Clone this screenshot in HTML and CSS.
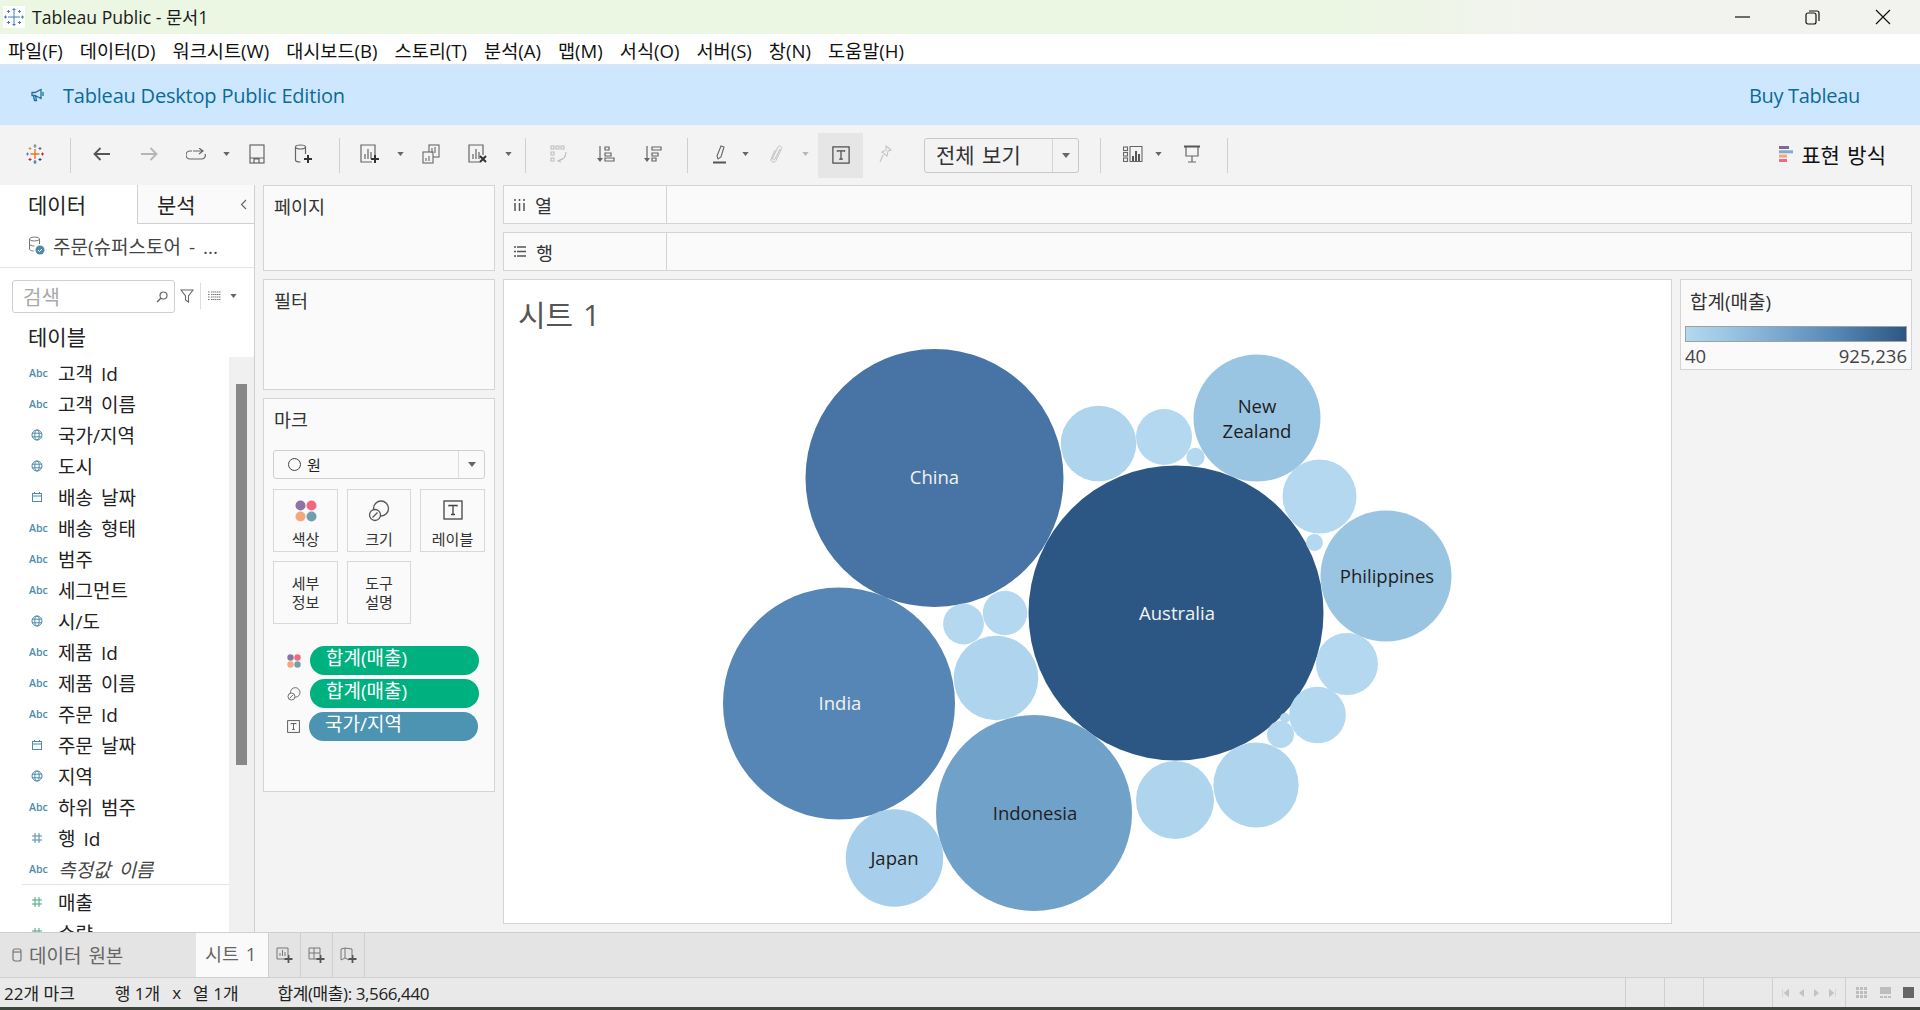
FILE: index.html
```html
<!DOCTYPE html>
<html lang="ko">
  <head>
    <meta charset="UTF-8" />
    <title>Tableau Public - 문서1</title>
    <link rel="stylesheet" href="styles.css">
  </head>
  <body>
    <svg class="defs" width="0" height="0">
      <symbol id="i-globe" viewBox="0 0 12 12"><g fill="none" stroke="#4d8bab" stroke-width="1"><circle cx="6" cy="6" r="5"/><ellipse cx="6" cy="6" rx="2.2" ry="5"/><path d="M1 4.2h10M1 7.8h10"/></g></symbol>
      <symbol id="i-cal" viewBox="0 0 12 12"><g fill="none" stroke="#4d8bab" stroke-width="1"><rect x="1.5" y="2.5" width="9" height="8"/><path d="M1.5 5h9M3.5 1v2M8.5 1v2"/></g></symbol>
      <symbol id="i-hash" viewBox="0 0 12 12"><path d="M4 1v10M8 1v10M1 4h10M1 8h10" fill="none" stroke="currentColor"/></symbol>
      <symbol id="i-dots" viewBox="0 0 22 22"><circle cx="5.5" cy="5.5" r="5" fill="#8b76a3"/><circle cx="16.5" cy="5.5" r="5" fill="#f4687f"/><circle cx="5.5" cy="16.5" r="5" fill="#f4a77a"/><circle cx="16.5" cy="16.5" r="5" fill="#6f9fb0"/></symbol>
      <symbol id="i-size" viewBox="0 0 22 22"><g fill="none" stroke="#555" stroke-width="1.3"><circle cx="13" cy="8.5" r="7.5"/><circle cx="7" cy="15" r="5.5" fill="#fafafa"/><path d="M4.5 17.5l5-5"/></g></symbol>
      <symbol id="i-text" viewBox="0 0 20 20"><g fill="none" stroke="#444" stroke-width="1.3"><rect x="1" y="1" width="18" height="18"/><path d="M6 6.5v-1h8v1M10 5.5v9M8 14.5h4"/></g></symbol>
      <symbol id="i-caret" viewBox="0 0 8 5"><path d="M0 0h8L4 5z" fill="#666"/></symbol>
      <symbol id="i-caret-off" viewBox="0 0 8 5"><path d="M0 0h8L4 5z" fill="#b8b8b8"/></symbol>
    </svg>

    <div class="titlebar">
      <svg class="app-icon" width="22" height="22" viewBox="0 0 22 22">
        <rect width="22" height="22" fill="#fff"/>
        <path d="M11 5v12M5 11h12M11 2v3M9.500 3.500h3M11 17v3M9.500 18.500h3M2.500 9.500v3M1 11h3M19.500 9.500v3M18 11h3M5.500 4v3M4 5.500h3M16.500 4v3M15 5.500h3M5.500 15v3M4 16.500h3M16.500 15v3M15 16.500h3" stroke="#3f7fb5" fill="none"/>
      </svg>
      <span class="app-title">Tableau Public - 문서1</span>
      <div class="win-ctrls">
        <svg width="16" height="16" viewBox="0 0 16 16"><path d="M0 8h15" stroke="#111" stroke-width="1.2"/></svg>
        <svg width="16" height="16" viewBox="0 0 16 16"><g fill="none" stroke="#111" stroke-width="1.2"><rect x="1" y="4" width="10" height="11" rx="2"/><path d="M4 2h8a2 2 0 0 1 2 2v8"/></g></svg>
        <svg width="16" height="16" viewBox="0 0 16 16"><path d="M1 1l14 14M15 1L1 15" stroke="#111" stroke-width="1.2"/></svg>
      </div>
    </div>

    <div class="menubar">
      <span>파일(F)</span><span>데이터(D)</span><span>워크시트(W)</span><span>대시보드(B)</span><span>스토리(T)</span><span>분석(A)</span><span>맵(M)</span><span>서식(O)</span><span>서버(S)</span><span>창(N)</span><span>도움말(H)</span>
    </div>

    <div class="banner">
      <svg width="13" height="14" viewBox="0 0 13 14"><path d="M1 4.500h3l6-3v9l-6-3H1zM2.500 8l1 4.500h2L4.500 8M12 4v4" fill="none" stroke="#1f6f9f" stroke-width="1.300"/></svg>
      <span class="banner-title">Tableau Desktop Public Edition</span>
      <span class="banner-buy">Buy Tableau</span>
    </div>

    <div class="toolbar">
      <div class="tb-logo">
        <svg width="18" height="20" viewBox="0 0 18 20">
          <path d="M9 5v10M4.500 10h9" stroke="#e8762b" stroke-width="1.4" fill="none"/>
          <path d="M9 0v4M7.500 2h3" stroke="#5b879b" fill="none"/>
          <path d="M9 16v4M7.500 18h3" stroke="#3f5f86" fill="none"/>
          <path d="M1.500 8.500v3M0 10h3" stroke="#59879b" fill="none"/>
          <path d="M16.500 8.500v3M15 10h3" stroke="#c72035" fill="none"/>
          <path d="M4 3v3M2.500 4.500h3" stroke="#eb912b" fill="none"/>
          <path d="M14 3v3M12.500 4.500h3" stroke="#5b6591" fill="none"/>
          <path d="M4 14v3M2.500 15.500h3" stroke="#c72035" fill="none"/>
          <path d="M14 14v3M12.500 15.500h3" stroke="#1f457e" fill="none"/>
        </svg>
      </div>
      <div class="tb-sep"></div>
      <div class="tb-group g1">
        <div class="tb"><svg width="18" height="14" viewBox="0 0 18 14"><path d="M17 7H2M7.500 1L1.500 7l6 6" fill="none" stroke="#555" stroke-width="1.8"/></svg></div>
        <div class="tb"><svg width="18" height="14" viewBox="0 0 18 14"><path d="M1 7h15M10.500 1l6 6-6 6" fill="none" stroke="#b5b5b5" stroke-width="1.8"/></svg></div>
        <div class="tb"><svg width="20" height="12" viewBox="0 0 20 12"><path d="M6 3H4a3.500 3.500 0 0 0 0 8h12a3.500 3.500 0 0 0 3-5M7 3h9M13 0l4 3-4 3" fill="none" stroke="#666" stroke-width="1.2"/></svg></div>
        <div class="tb-caret"><svg width="7" height="4"><use href="#i-caret"/></svg></div>
        <div class="tb"><svg width="16" height="20" viewBox="0 0 16 20"><g fill="none" stroke="#666" stroke-width="1.2"><rect x="1" y="1" width="14" height="18"/><path d="M1 14h14M5 19v-4h5v4"/></g></svg></div>
        <div class="tb"><svg width="20" height="20" viewBox="0 0 20 20"><g fill="none" stroke="#666" stroke-width="1.2"><ellipse cx="6.500" cy="3" rx="5" ry="2"/><path d="M1.500 3v13c0 1 1.500 2 5 2M11.500 3v7"/></g><path d="M14 11v8M10 15h8" stroke="#333" stroke-width="2"/></svg></div>
      </div>
      <div class="tb-sep"></div>
      <div class="tb-group g2">
        <div class="tb"><svg width="20" height="20" viewBox="0 0 20 20"><g fill="none" stroke="#666" stroke-width="1.2"><path d="M12 18H1V1h14v10"/><path d="M5 15V10M8 15V5M11 15V8"/></g><path d="M15 11v8M11 15h8" stroke="#333" stroke-width="2"/></svg></div>
        <div class="tb-caret"><svg width="7" height="4"><use href="#i-caret"/></svg></div>
        <div class="tb"><svg width="18" height="20" viewBox="0 0 18 20"><g fill="none" stroke="#666" stroke-width="1.100"><rect x="7" y="1" width="10" height="12"/><rect x="1" y="8" width="10" height="11" fill="#f3f3f3"/><path d="M4 17v-3M7 17v-5M10 9V4M13 9V3"/></g></svg></div>
        <div class="tb"><svg width="20" height="20" viewBox="0 0 20 20"><g fill="none" stroke="#666" stroke-width="1.2"><path d="M12 18H1V1h14v10"/><path d="M5 15V10M8 15V5M11 15V8"/></g><path d="M12 12l6 6M18 12l-6 6" stroke="#333" stroke-width="2"/></svg></div>
        <div class="tb-caret"><svg width="7" height="4"><use href="#i-caret"/></svg></div>
      </div>
      <div class="tb-sep"></div>
      <div class="tb-group g3">
        <div class="tb"><svg width="18" height="18" viewBox="0 0 18 18"><g fill="none" stroke="#bdbdbd" stroke-width="1.100"><path d="M1 1h3v3H1zM6 1h3v3H6zM11 1h3v3h-3zM1 7h3v3H1zM1 13h3v3H1z"/><path d="M16 7c0 5-3 8-8 9M14 13l-6 3 3 1"/></g></svg></div>
        <div class="tb"><svg width="18" height="18" viewBox="0 0 18 18"><g fill="none" stroke="#666" stroke-width="1.2"><path d="M3 1v14"/><path d="M8 2h4v3H8zM8 8h6v3H8zM8 13h9v3H8z"/></g><path d="M0 13h6l-3 4z" fill="#666"/></svg></div>
        <div class="tb"><svg width="18" height="18" viewBox="0 0 18 18"><g fill="none" stroke="#666" stroke-width="1.2"><path d="M3 1v14"/><path d="M8 2h9v3H8zM8 8h6v3H8zM8 13h4v3H8z"/></g><path d="M0 13h6l-3 4z" fill="#666"/></svg></div>
      </div>
      <div class="tb-sep"></div>
      <div class="tb-group g4">
        <div class="tb-s"><svg width="14" height="20" viewBox="0 0 14 20"><path d="M4 12L8 2l3 1-3 10-3 2z" fill="none" stroke="#666" stroke-width="1.100"/><path d="M0 18.500h13" stroke="#555" stroke-width="2"/></svg></div>
        <div class="tb-caret"><svg width="7" height="4"><use href="#i-caret"/></svg></div>
        <div class="tb-s tb-gap-l"><svg width="14" height="20" viewBox="0 0 14 20"><path d="M10 5l-5 10c-.8 1.500-3 .7-2.300-1L8 3c1-2 4.500-.8 3.500 1.500L6 16.500c-1.500 3-6 1.500-4.800-1.500L5 6" fill="none" stroke="#c0c0c0" stroke-width="1"/></svg></div>
        <div class="tb-caret tb-gap-s"><svg width="7" height="4"><use href="#i-caret-off"/></svg></div>
        <div class="tb-on"><svg width="18" height="18"><use href="#i-text"/></svg></div>
        <div class="tb-pin"><svg width="14" height="18" viewBox="0 0 14 18"><path d="M8 1l5 4-3 1-1 5-5-4 4-2zM5 10l-3 7" fill="none" stroke="#c4c4c4" stroke-width="1.100"/></svg></div>
        <div class="fit-select"><span class="fit-label">전체 보기</span><span class="fit-arrow"><svg width="8" height="5"><use href="#i-caret"/></svg></span></div>
      </div>
      <div class="tb-sep tb-sep-fit"></div>
      <div class="tb-group g5">
        <div class="tb-s"><svg width="20" height="16" viewBox="0 0 20 16"><g fill="none" stroke="#666" stroke-width="1.100"><rect x="0.500" y="1" width="4" height="3.500"/><rect x="0.500" y="6.500" width="4" height="3.500"/><rect x="0.500" y="12" width="4" height="3.500"/><path d="M7 .5h12v15H7z"/></g><path d="M10 15V10M13 15V5M16 15V8" stroke="#555" stroke-width="2"/></svg></div>
        <div class="tb-caret"><svg width="7" height="4"><use href="#i-caret"/></svg></div>
        <div class="tb tb-gap-s"><svg width="16" height="18" viewBox="0 0 16 18"><g fill="none" stroke="#666" stroke-width="1.200"><path d="M2 2v9h12V2M8 11v6M4 17h8"/></g><path d="M0 1.500h16" stroke="#555" stroke-width="2"/></svg></div>
      </div>
      <div class="tb-sep"></div>
      <div class="show-me">
        <svg width="14" height="16" viewBox="0 0 14 16"><rect y="0" width="10" height="3" fill="#7d6a98"/><rect y="4.300" width="14" height="3" fill="#83a9cf"/><rect y="8.600" width="8" height="3" fill="#f4a77a"/><rect y="13" width="8" height="3" fill="#f4687f"/></svg>
        <span>표현 방식</span>
      </div>
    </div>

    <div class="workspace">
      <div class="data-pane">
        <div class="pane-tabs">
          <div class="pane-tab">데이터</div>
          <div class="pane-tab pane-tab-off">분석<svg class="collapse" width="7" height="11" viewBox="0 0 7 11"><path d="M6 1L1.500 5.500 6 10" fill="none" stroke="#666" stroke-width="1.200"/></svg></div>
        </div>
        <div class="source">
          <svg width="17" height="19" viewBox="0 0 17 19"><g fill="none" stroke="#777"><ellipse cx="6.500" cy="3" rx="5" ry="2"/><path d="M1.500 3v10c0 1 1.500 2 4 2M11.500 3v5M1.500 8c0 1 2 2 5 2"/></g><circle cx="12" cy="14" r="4.500" fill="#4d8bab"/><path d="M10 14l1.500 1.500L14 13" stroke="#fff" fill="none"/></svg>
          <span>주문(슈퍼스토어 - ...</span>
        </div>
        <div class="search-row">
          <div class="search-box"><span>검색</span><svg width="12" height="12" viewBox="0 0 12 12"><circle cx="7.500" cy="4.500" r="3.500" fill="none" stroke="#666" stroke-width="1.200"/><path d="M5 7l-4 4" stroke="#666" stroke-width="1.400"/></svg></div>
          <svg class="filter-icon" width="14" height="14" viewBox="0 0 14 14"><path d="M1 1h12L8.500 7v6l-3-2V7z" fill="none" stroke="#666" stroke-width="1.100"/></svg>
          <span class="search-sep"></span>
          <svg class="view-icon" width="13" height="10" viewBox="0 0 13 10"><path d="M0 1h2M3 1h10M0 3.500h2M3 3.500h10M0 6h2M3 6h10M0 8.500h2M3 8.500h10" stroke="#777" stroke-dasharray="1.500 .5"/></svg>
          <svg width="7" height="4"><use href="#i-caret"/></svg>
        </div>
        <div class="tables-head">테이블</div>
        <div class="pane-body">
          <div class="field-list">
            <div class="field"><span class="abc">Abc</span><span>고객 Id</span></div>
            <div class="field"><span class="abc">Abc</span><span>고객 이름</span></div>
            <div class="field"><span class="f-ic"><svg width="12" height="12"><use href="#i-globe"/></svg></span><span>국가/지역</span></div>
            <div class="field"><span class="f-ic"><svg width="12" height="12"><use href="#i-globe"/></svg></span><span>도시</span></div>
            <div class="field"><span class="f-ic"><svg width="12" height="12"><use href="#i-cal"/></svg></span><span>배송 날짜</span></div>
            <div class="field"><span class="abc">Abc</span><span>배송 형태</span></div>
            <div class="field"><span class="abc">Abc</span><span>범주</span></div>
            <div class="field"><span class="abc">Abc</span><span>세그먼트</span></div>
            <div class="field"><span class="f-ic"><svg width="12" height="12"><use href="#i-globe"/></svg></span><span>시/도</span></div>
            <div class="field"><span class="abc">Abc</span><span>제품 Id</span></div>
            <div class="field"><span class="abc">Abc</span><span>제품 이름</span></div>
            <div class="field"><span class="abc">Abc</span><span>주문 Id</span></div>
            <div class="field"><span class="f-ic"><svg width="12" height="12"><use href="#i-cal"/></svg></span><span>주문 날짜</span></div>
            <div class="field"><span class="f-ic"><svg width="12" height="12"><use href="#i-globe"/></svg></span><span>지역</span></div>
            <div class="field"><span class="abc">Abc</span><span>하위 범주</span></div>
            <div class="field"><span class="f-ic dim"><svg width="12" height="12"><use href="#i-hash"/></svg></span><span>행 Id</span></div>
            <div class="field field-calc"><span class="abc">Abc</span><span>측정값 이름</span></div>
            <div class="field-line"></div>
            <div class="field"><span class="f-ic meas"><svg width="12" height="12"><use href="#i-hash"/></svg></span><span>매출</span></div>
            <div class="field"><span class="f-ic meas"><svg width="12" height="12"><use href="#i-hash"/></svg></span><span>수량</span></div>
          </div>
          <div class="scroll-track"><div class="scroll-thumb"></div></div>
        </div>
      </div>

      <div class="cards">
        <div class="card card-pages"><div class="card-title">페이지</div></div>
        <div class="card card-filters"><div class="card-title">필터</div></div>
        <div class="card card-marks">
          <div class="card-title">마크</div>
          <div class="mark-select">
            <span class="mark-type"><i class="ring"></i>원</span>
            <span class="mark-arrow"><svg width="8" height="5"><use href="#i-caret"/></svg></span>
          </div>
          <div class="mark-grid">
            <div class="mark-btn"><svg width="22" height="22"><use href="#i-dots"/></svg><span>색상</span></div>
            <div class="mark-btn"><svg width="22" height="22"><use href="#i-size"/></svg><span>크기</span></div>
            <div class="mark-btn"><svg width="20" height="20"><use href="#i-text"/></svg><span>레이블</span></div>
            <div class="mark-btn mark-btn-text"><span>세부<br>정보</span></div>
            <div class="mark-btn mark-btn-text"><span>도구<br>설명</span></div>
          </div>
          <div class="pills">
            <div class="pill-row"><svg width="14" height="14"><use href="#i-dots"/></svg><div class="pill pill-green">합계(매출)</div></div>
            <div class="pill-row"><svg width="14" height="14"><use href="#i-size"/></svg><div class="pill pill-green">합계(매출)</div></div>
            <div class="pill-row"><svg width="13" height="13"><use href="#i-text"/></svg><div class="pill pill-blue">국가/지역</div></div>
          </div>
        </div>
      </div>

      <div class="canvas">
        <div class="shelf">
          <div class="shelf-label"><svg width="11" height="12" viewBox="0 0 11 12"><path d="M1 4v8M5.500 4v8M10 4v8M1 0v2M5.500 0v2M10 0v2" stroke="#555" stroke-width="1.500"/></svg>열</div>
        </div>
        <div class="shelf">
          <div class="shelf-label"><svg width="12" height="11" viewBox="0 0 12 11"><path d="M0 1h2M3 1h9M0 5.500h2M3 5.500h9M0 10h2M3 10h9" stroke="#555" stroke-width="1.500"/></svg>행</div>
        </div>
        <div class="view-row">
          <div class="sheet">
            <div class="sheet-title">시트 1</div>
            <svg class="bubbles" width="1167" height="582" viewBox="504 340 1167 582">
              <circle class="c1" cx="1176" cy="613" r="147.500"/>
              <circle class="c2" cx="934.500" cy="478" r="129"/>
              <circle class="c3" cx="839" cy="703.500" r="116"/>
              <circle class="c4" cx="1034" cy="813" r="98"/>
              <circle class="c5" cx="1257" cy="418" r="63.500"/>
              <circle class="c5" cx="1386" cy="576" r="65.500"/>
              <circle class="c6" cx="894.500" cy="858" r="48.700"/>
              <circle class="c7" cx="996" cy="678" r="42.300"/>
              <circle class="c7" cx="1256" cy="785" r="42.600"/>
              <circle class="c7" cx="1175" cy="800" r="39"/>
              <circle class="c7" cx="1098.500" cy="443.500" r="37.800"/>
              <circle class="c8" cx="1319.500" cy="496.500" r="37"/>
              <circle class="c8" cx="1347" cy="664" r="31"/>
              <circle class="c8" cx="1317.500" cy="715" r="28.300"/>
              <circle class="c8" cx="1164" cy="437" r="28"/>
              <circle class="c8" cx="1005" cy="613" r="22.200"/>
              <circle class="c8" cx="963.500" cy="624" r="20.400"/>
              <circle class="c8" cx="1280.500" cy="734.500" r="13.500"/>
              <circle class="c8" cx="1195.500" cy="457" r="9.200"/>
              <circle class="c8" cx="1314.500" cy="542.500" r="8.400"/>
              <circle class="c8" cx="1285" cy="718" r="5"/>
              <text class="lbl lbl-w" x="934.500" y="484">China</text>
              <text class="lbl lbl-w" x="1177" y="620">Australia</text>
              <text class="lbl lbl-w" x="840" y="710">India</text>
              <text class="lbl" x="1035" y="820">Indonesia</text>
              <text class="lbl" x="894.500" y="865">Japan</text>
              <text class="lbl" x="1387" y="583">Philippines</text>
              <text class="lbl" x="1257" y="413">New</text>
              <text class="lbl" x="1257" y="438">Zealand</text>
            </svg>
          </div>
          <div class="legend">
            <div class="legend-title">합계(매출)</div>
            <div class="legend-ramp"></div>
            <div class="legend-ends"><span>40</span><span>925,236</span></div>
          </div>
        </div>
      </div>
    </div>

    <div class="tabbar">
      <div class="tab-source">
        <svg width="10" height="14" viewBox="0 0 10 14"><g fill="none" stroke="#777" stroke-width="1.200"><rect x="1" y="1" width="8" height="12" rx="2"/><path d="M1 4h8"/></g></svg>
        <span>데이터 원본</span>
      </div>
      <div class="tab-sheet">시트 1</div>
      <div class="tab-add"><svg width="17" height="16" viewBox="0 0 17 16"><g fill="none" stroke="#777"><path d="M9 12H1V1h11v7"/><path d="M4 9V6M6.500 9V3M9 9V5"/></g><path d="M12.500 8v8M8.500 12h8" stroke="#555" stroke-width="1.800"/></svg></div>
      <div class="tab-add"><svg width="17" height="16" viewBox="0 0 17 16"><g fill="none" stroke="#777"><path d="M9 12H1V1h11v7M1 6h11M6 1v11"/></g><path d="M12.500 8v8M8.500 12h8" stroke="#555" stroke-width="1.800"/></svg></div>
      <div class="tab-add"><svg width="17" height="16" viewBox="0 0 17 16"><g fill="none" stroke="#777"><path d="M9 13l-4-2-4 2V2l4-1 7 1v6M5 1v10"/></g><path d="M12.500 8v8M8.500 12h8" stroke="#555" stroke-width="1.800"/></svg></div>
    </div>

    <div class="statusbar">
      <span class="st-marks">22개 마크</span>
      <span class="st-rows">행 1개</span>
      <span class="st-x">x</span>
      <span class="st-cols">열 1개</span>
      <span class="st-sum">합계(매출): 3,566,440</span>
      <div class="st-cells">
        <div class="st-cell st-w39"></div>
        <div class="st-cell st-w39"></div>
        <div class="st-cell st-w69"></div>
        <div class="st-cell st-nav">
          <svg width="7" height="8" viewBox="0 0 7 8"><path d="M.5 0v8M7 0v8L2 4z" fill="#c2c2c2" stroke="#c2c2c2" stroke-width=".5"/></svg>
          <svg width="5" height="8" viewBox="0 0 5 8"><path d="M5 0v8L0 4z" fill="#c2c2c2"/></svg>
          <svg width="5" height="8" viewBox="0 0 5 8"><path d="M0 0v8l5-4z" fill="#c2c2c2"/></svg>
          <svg width="7" height="8" viewBox="0 0 7 8"><path d="M6.500 0v8M0 0v8l5-4z" fill="#c2c2c2" stroke="#c2c2c2" stroke-width=".5"/></svg>
        </div>
        <div class="st-cell st-views">
          <svg width="11" height="11" viewBox="0 0 11 11"><path d="M0 0h3v3H0zM4 0h3v3H4zM8 0h3v3H8zM0 4h3v3H0zM4 4h3v3H4zM8 4h3v3H8zM0 8h3v3H0zM4 8h3v3H4zM8 8h3v3H8z" fill="#bdbdbd"/></svg>
          <svg width="11" height="11" viewBox="0 0 11 11"><path d="M0 0h11v7H0zM0 9h3v2H0zM4 9h3v2H4zM8 9h3v2H8z" fill="#bdbdbd"/></svg>
          <svg width="11" height="11" viewBox="0 0 11 11"><path d="M0 0h11v11H0z" fill="#666"/></svg>
        </div>
      </div>
    </div>
    <div class="task-strip"></div>
  </body>
</html>
```

FILE: styles.css
```css
* {
  margin: 0;
  padding: 0;
  box-sizing: border-box;
}
body {
  width: 1920px;
  height: 1010px;
  overflow: hidden;
  display: flex;
  flex-direction: column;
  background: #f3f3f3;
  color: #222;
  font-family: "Open Sans", "Noto Sans CJK KR", sans-serif;
}
svg {
  display: block;
  flex-shrink: 0;
}
.defs {
  position: absolute;
}

/* window chrome */
.titlebar {
  height: 34px;
  display: flex;
  align-items: center;
  padding-left: 3px;
  background: linear-gradient(90deg, #ebf6e3 0%, #ebf6e3 70%, #f2f3ee 80%, #f2f3ee 100%);
}
.app-title {
  margin-left: 7px;
  padding-bottom: 2px;
  font-size: 17.6px;
  color: #1a1a1a;
}
.win-ctrls {
  margin-left: auto;
  display: flex;
  gap: 54px;
  padding-right: 29px;
}
.menubar {
  height: 31px;
  display: flex;
  align-items: center;
  gap: 17px;
  padding-left: 8px;
  background: #fff;
  border-bottom: 1px solid #e4e4e4;
  font-size: 18.6px;
  color: #111;
}
.banner {
  height: 60px;
  display: flex;
  align-items: center;
  padding: 0 60px 0 31px;
  background: #cde8fe;
  color: #0e6a99;
}
.banner-title {
  margin-left: 19px;
  font-size: 20px;
  letter-spacing: -0.2px;
}
.banner-buy {
  margin-left: auto;
  font-size: 20px;
  letter-spacing: -0.3px;
}

/* toolbar */
.toolbar {
  height: 60px;
  display: flex;
  align-items: center;
}
.tb-logo {
  width: 70px;
  display: flex;
  justify-content: center;
  padding-bottom: 2px;
}
.tb-sep {
  width: 1px;
  height: 35px;
  background: #cfcfcf;
}
.tb-group {
  display: flex;
  align-items: center;
}
.g1 { padding: 0 12px 0 7px; }
.g2 { padding: 0 10px 0 6px; }
.g3 { padding: 0 11px 0 9px; }
.g4 { padding-left: 14px; }
.g5 { padding-left: 14px; width: 126px; }
.tb, .tb-s, .tb-caret, .tb-on, .tb-pin {
  display: flex;
  align-items: center;
  justify-content: center;
  padding-bottom: 2px;
}
.tb { width: 47px; }
.tb-s { width: 36px; }
.tb-caret { width: 14px; }
.tb-pin { width: 44px; }
.tb-gap-l { margin-left: 7px; }
.tb-gap-s { margin-left: 3px; }
.tb-on {
  width: 45px;
  height: 45px;
  margin-left: 6px;
  padding-bottom: 0;
  background: #e6e6e6;
}
.fit-select {
  width: 155px;
  height: 35px;
  margin-left: 17px;
  display: flex;
  align-items: center;
  border: 1px solid #c8c8c8;
  border-radius: 3px;
  font-size: 21px;
  color: #333;
  white-space: nowrap;
}
.fit-label {
  flex: 1;
  padding: 0 0 2px 11px;
  word-spacing: 2px;
}
.fit-arrow {
  width: 26px;
  height: 33px;
  display: flex;
  align-items: center;
  justify-content: center;
  border-left: 1px solid #d4d4d4;
}
.tb-sep-fit {
  margin-left: 21px;
}
.show-me {
  margin-left: auto;
  padding: 0 34px 2px 0;
  display: flex;
  align-items: center;
  gap: 8px;
  font-size: 21px;
  color: #111;
  word-spacing: 2px;
  white-space: nowrap;
}

/* data pane */
.workspace {
  height: 747px;
  display: flex;
  overflow: hidden;
}
.data-pane {
  width: 255px;
  display: flex;
  flex-direction: column;
  background: #fff;
  border-right: 1px solid #d0d0d0;
}
.pane-tabs {
  height: 39px;
  display: flex;
}
.pane-tab {
  width: 137px;
  padding-left: 28px;
  font-size: 21px;
  line-height: 40px;
  color: #222;
}
.pane-tab-off {
  flex: 1;
  position: relative;
  padding-left: 19px;
  background: #fafafa;
  border-left: 1px solid #d0d0d0;
  border-bottom: 1px solid #d0d0d0;
}
.collapse {
  position: absolute;
  right: 7px;
  top: 14px;
}
.source {
  height: 44px;
  display: flex;
  align-items: center;
  gap: 8px;
  padding-left: 28px;
  border-bottom: 1px solid #e4e4e4;
  font-size: 19px;
  color: #444;
  word-spacing: 3px;
  white-space: nowrap;
}
.search-row {
  height: 57px;
  display: flex;
  align-items: flex-start;
  padding: 12px 0 0 12px;
}
.search-box {
  width: 163px;
  height: 33px;
  display: flex;
  align-items: center;
  justify-content: space-between;
  padding: 0 6px 0 10px;
  border: 1px solid #cfcfcf;
  border-radius: 3px;
  font-size: 20px;
  color: #a8a8a8;
}
.filter-icon {
  margin: 9px 0 0 5px;
}
.search-sep {
  width: 1px;
  height: 26px;
  margin: 3px 0 0 6px;
  background: #ddd;
}
.view-icon {
  margin: 11px 9px 0 7px;
}
.search-row > svg:last-child {
  margin-top: 14px;
}
.tables-head {
  height: 32px;
  padding-left: 28px;
  font-size: 21px;
  line-height: 24px;
  color: #222;
}
.pane-body {
  flex: 1;
  min-height: 0;
  display: flex;
  overflow: hidden;
}
.field-list {
  width: 229px;
  padding-left: 22px;
}
.field {
  height: 31px;
  display: flex;
  align-items: center;
  font-size: 19px;
  color: #222;
  word-spacing: 3px;
  white-space: nowrap;
}
.field-calc {
  font-style: italic;
  color: #444;
}
.abc, .f-ic {
  width: 36px;
  display: flex;
  align-items: center;
}
.abc {
  padding-left: 7px;
  font-size: 10.500px;
  font-style: normal;
  font-weight: 600;
  color: #4d8bab;
  word-spacing: 0;
}
.f-ic {
  padding-left: 9px;
}
.dim { color: #4d8bab; }
.meas { color: #4aa57c; }
.field-line {
  height: 1px;
  margin-bottom: 1px;
  background: #e4e4e4;
}
.scroll-track {
  flex: 1;
  padding: 27px 7px 0;
  background: #f0f0f0;
}
.scroll-thumb {
  height: 381px;
  background: #888;
}

/* cards column */
.cards {
  width: 232px;
  margin: 0 8px;
  display: flex;
  flex-direction: column;
  gap: 8px;
}
.card {
  background: #fafafa;
  border: 1px solid #d4d4d4;
}
.card-pages { height: 86px; }
.card-filters { height: 111px; }
.card-marks { height: 394px; }
.card-title {
  padding: 9px 0 0 10px;
  font-size: 18.500px;
  line-height: 24px;
  color: #333;
}
.mark-select {
  width: 212px;
  height: 29px;
  margin: 18px 0 0 9px;
  display: flex;
  align-items: center;
  border: 1px solid #cfcfcf;
  border-radius: 3px;
  font-size: 15px;
}
.mark-type {
  flex: 1;
  display: flex;
  align-items: center;
  gap: 6px;
  padding-left: 14px;
}
.ring {
  width: 13px;
  height: 13px;
  border: 1px solid #444;
  border-radius: 50%;
}
.mark-arrow {
  width: 26px;
  height: 27px;
  display: flex;
  align-items: center;
  justify-content: center;
  border-left: 1px solid #ddd;
}
.mark-grid {
  margin: 10px 0 0 9px;
  display: grid;
  grid-template-columns: 65px 64px 65px;
  grid-auto-rows: 63px;
  gap: 9px;
}
.mark-btn {
  display: flex;
  flex-direction: column;
  align-items: center;
  justify-content: space-between;
  padding: 10px 0 2px;
  border: 1px solid #d8d8d8;
  font-size: 15px;
  line-height: 19px;
  color: #333;
}
.mark-btn-text {
  justify-content: center;
  padding: 0;
}
.mark-btn-text span {
  text-align: center;
}
.pills {
  margin-top: 22px;
  display: flex;
  flex-direction: column;
  gap: 4px;
}
.pill-row {
  display: flex;
  align-items: center;
  gap: 9px;
  padding-left: 23px;
}
.pill {
  width: 169px;
  height: 29px;
  padding-left: 16px;
  border-radius: 15px;
  font-size: 19px;
  line-height: 25px;
  color: #fff;
}
.pill-green { background: #00b180; }
.pill-blue { background: #4c94b2; }

/* shelves and view */
.canvas {
  flex: 1;
  min-width: 0;
  padding-right: 8px;
  display: flex;
  flex-direction: column;
}
.shelf {
  height: 39px;
  margin-bottom: 8px;
  background: #fafafa;
  border: 1px solid #d4d4d4;
}
.shelf-label {
  width: 163px;
  height: 100%;
  display: flex;
  align-items: center;
  gap: 10px;
  padding-left: 10px;
  border-right: 1px solid #d4d4d4;
  font-size: 18.500px;
  color: #333;
}
.view-row {
  display: flex;
  gap: 8px;
  align-items: flex-start;
}
.sheet {
  width: 1169px;
  height: 645px;
  background: #fff;
  border: 1px solid #d4d4d4;
}
.sheet-title {
  height: 60px;
  padding: 15px 0 0 14px;
  font-size: 30px;
  line-height: 40px;
  color: #555;
  word-spacing: 2px;
}
.c1 { fill: #2c5784; }
.c2 { fill: #4774a4; }
.c3 { fill: #5686b5; }
.c4 { fill: #70a1c9; }
.c5 { fill: #99c5e3; }
.c6 { fill: #a7cfeb; }
.c7 { fill: #aed4ee; }
.c8 { fill: #b3d8ef; }
.lbl {
  font-size: 18.500px;
  text-anchor: middle;
  fill: #1e1e1e;
}
.lbl-w {
  fill: #f2f2f2;
}
.legend {
  width: 232px;
  height: 91px;
  padding: 0 4px;
  background: #fafafa;
  border: 1px solid #d4d4d4;
}
.legend-title {
  padding: 10px 0 0 5px;
  font-size: 19px;
  line-height: 24px;
  color: #333;
}
.legend-ramp {
  height: 16px;
  margin-top: 12px;
  background: linear-gradient(90deg, #b3d8ef, #99c5e3 20%, #5a8cba 65%, #2c5784);
  border: 1px solid #a0a0a0;
}
.legend-ends {
  display: flex;
  justify-content: space-between;
  font-size: 18.500px;
  line-height: 27px;
  color: #444;
}

/* bottom bars */
.tabbar {
  height: 45px;
  display: flex;
  background: #e4e4e4;
  border-top: 1px solid #cfcfcf;
}
.tab-source {
  width: 196px;
  display: flex;
  align-items: center;
  gap: 7px;
  padding-left: 12px;
  font-size: 19px;
  color: #666;
  word-spacing: 2px;
}
.tab-sheet {
  width: 73px;
  padding-left: 9px;
  background: #fafafa;
  border-right: 1px solid #cfcfcf;
  font-size: 18.500px;
  line-height: 42px;
  color: #666;
  word-spacing: 2px;
  white-space: nowrap;
}
.tab-add {
  width: 32px;
  display: flex;
  align-items: center;
  justify-content: center;
  border-right: 1px solid #cfcfcf;
}
.statusbar {
  height: 30px;
  display: flex;
  align-items: center;
  background: #e9e9e9;
  border-top: 1px solid #cfcfcf;
  font-size: 17px;
  color: #222;
  white-space: nowrap;
}
.st-marks { margin-left: 4px; }
.st-rows { margin-left: 40px; }
.st-x { margin-left: 12px; }
.st-cols { margin-left: 12px; }
.st-sum {
  margin-left: 39px;
  letter-spacing: -0.4px;
}
.st-cells {
  margin-left: auto;
  height: 100%;
  display: flex;
}
.st-cell {
  height: 100%;
  border-left: 1px solid #cfcfcf;
}
.st-w39 { width: 39px; }
.st-w69 { width: 69px; }
.st-nav {
  width: 73px;
  display: flex;
  align-items: center;
  justify-content: space-between;
  padding: 0 9px;
}
.st-views {
  width: 75px;
  display: flex;
  align-items: center;
  justify-content: space-between;
  padding: 0 6px 0 10px;
}
.task-strip {
  height: 3px;
  background: #3c463b;
}
```
